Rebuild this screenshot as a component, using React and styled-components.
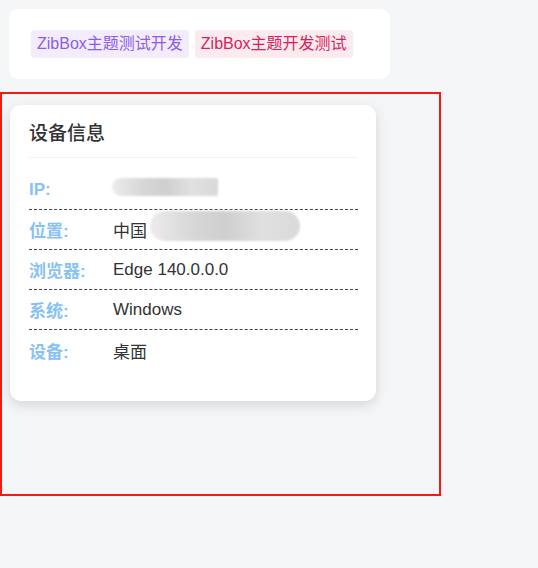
import React from "react";
import styled, { createGlobalStyle } from "styled-components";

const GlobalStyle = createGlobalStyle`
  body {
    margin: 0;
    background: #f3f5f7;
    font-family: "Liberation Sans", "Noto Sans CJK SC", sans-serif;
  }
`;

const Page = styled.div`
  width: 538px;
  height: 568px;
  padding-top: 9px;
  box-sizing: border-box;
`;

const TagCard = styled.div`
  margin-left: 9px;
  width: 381px;
  height: 70px;
  box-sizing: border-box;
  padding: 21px 22px;
  background: #fff;
  border-radius: 9px;
  display: flex;
  gap: 6px;
  align-items: flex-start;
`;

const Tag = styled.span`
  height: 28px;
  line-height: 28px;
  padding: 0 6px;
  font-size: 16px;
  border-radius: 4px;
  color: ${(p) => (p.$tone === "red" ? "#d81e5b" : "#8f5ce6")};
  background: ${(p) => (p.$tone === "red" ? "#fbebee" : "#f3ecfd")};
`;

const Highlight = styled.div`
  margin-top: 13px;
  width: 441px;
  height: 404px;
  box-sizing: border-box;
  border: 2px solid #f01b12;
  padding: 11px 0 0 8px;
`;

const Card = styled.div`
  width: 366px;
  height: 296px;
  box-sizing: border-box;
  padding: 15px 18px 0 19px;
  background: #fff;
  border-radius: 11px;
  box-shadow: 0 4px 12px rgba(0, 0, 0, 0.13);
`;

const Title = styled.h3`
  margin: 0 0 12px;
  font-size: 19px;
  font-weight: 500;
  color: #333;
  line-height: 27px;
  padding-bottom: 10px;
  border-bottom: 1px solid #f1f2f4;
`;

const Row = styled.div`
  position: relative;
  display: flex;
  align-items: center;
  height: 40px;
  box-sizing: border-box;
  border-bottom: ${(p) => (p.$last ? "none" : "1px dashed #444")};
  font-size: 17px;
`;

const Label = styled.span`
  width: 84px;
  font-weight: bold;
  color: #88c2f4;
`;

const Value = styled.span`
  color: #333;
`;

// grey smudge laid over the hidden values
const Blur = styled.div`
  position: absolute;
  background: linear-gradient(90deg, #ececec, #d6d6d6 30%, #cfcfcf 50%, #e0e0e0 75%, #d9d9d9);
  filter: blur(1px);
`;

const rows = [
  { label: "IP:", value: "" },
  { label: "位置:", value: "中国" },
  { label: "浏览器:", value: "Edge 140.0.0.0" },
  { label: "系统:", value: "Windows" },
  { label: "设备:", value: "桌面" },
];

export default function App() {
  return (
    <Page>
      <GlobalStyle />
      <TagCard>
        <Tag>ZibBox主题测试开发</Tag>
        <Tag $tone="red">ZibBox主题开发测试</Tag>
      </TagCard>
      <Highlight>
        <Card>
          <Title>设备信息</Title>
          {rows.map((r, i) => (
            <Row key={r.label} $last={i === rows.length - 1}>
              <Label>{r.label}</Label>
              <Value>{r.value}</Value>
              {i === 0 && (
                <Blur style={{ left: 83, top: 8, width: 106, height: 18, borderRadius: "9px 2px 2px 9px" }} />
              )}
              {i === 1 && (
                <Blur style={{ left: 121, top: 1, width: 150, height: 30, borderRadius: 15 }} />
              )}
            </Row>
          ))}
        </Card>
      </Highlight>
    </Page>
  );
}
